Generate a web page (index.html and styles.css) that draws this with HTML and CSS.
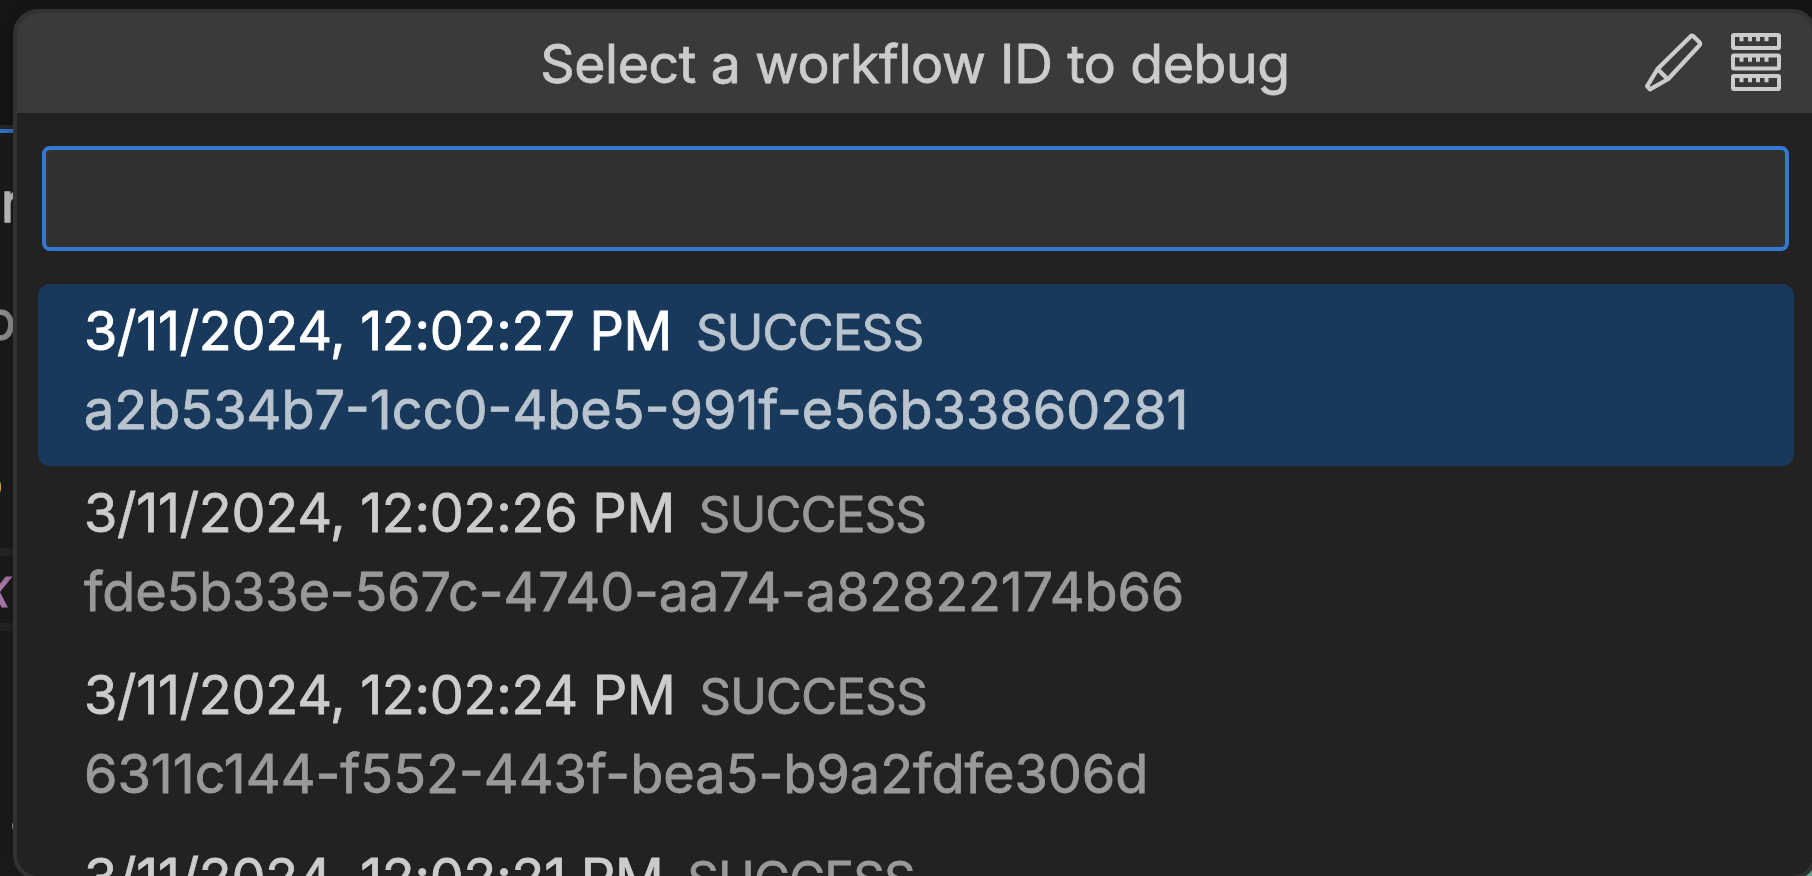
FILE: index.html
```html
<!DOCTYPE html>
<html lang="en">
<head>
<meta charset="utf-8">
<title>Select a workflow ID to debug</title>
<link rel="stylesheet" href="styles.css">
</head>
<body>
<div class="editor">
  <div class="editor-top"></div>
  <span class="frag frag-r">r</span>
  <span class="frag frag-p">p</span>
  <span class="frag-dot"></span>
  <span class="frag-rule rule-a"></span>
  <span class="frag frag-x">x</span>
  <span class="frag-rule rule-b"></span>
  <span class="frag-ring"></span>
  <span class="frag-corner"></span>
</div>
<main class="picker">
  <header class="titlebar">
    <h1 class="title">Select a workflow ID to debug</h1>
    <div class="actions">
      <svg class="icon" width="60" height="60" viewBox="0 0 60 60" fill="none" stroke="#cccccc" stroke-width="4.3" stroke-linejoin="round"><path d="M4.2 53.2 14.5 36 47.8 3.2Q49 2.2 50.3 3.2L56.5 9.2Q57.6 10.8 56.5 12.2L25.2 46 7 56.4Z"/><path d="M14.3 35.8 25 46.5"/></svg>
      <svg class="icon" width="50" height="58" viewBox="0 0 50 58"><g fill="none" stroke="#cccccc" stroke-width="4"><rect x="2" y="2" width="46" height="13" rx="1"/><rect x="2" y="22.5" width="46" height="13" rx="1"/><rect x="2" y="43" width="46" height="13" rx="1"/></g><path fill="#cccccc" d="M8.500 3h4v5.300h-4zM17 3h4v5.300h-4zM25 3h4v5.300h-4zM33.500 3h4v5.300h-4zM8.500 23.500h4v5.300h-4zM17 23.500h4v5.300h-4zM25 23.500h4v5.300h-4zM33.500 23.500h4v5.300h-4zM8.500 44h4v5.300h-4zM17 44h4v5.300h-4zM25 44h4v5.300h-4zM33.500 44h4v5.300h-4z"/></svg>
    </div>
  </header>
  <input class="filter" type="text" aria-label="Filter">
  <ul class="list">
    <li class="row selected"><div class="line"><span class="date">3/11/2024, 12:02:27 PM</span><span class="status">SUCCESS</span></div><div class="line id">a2b534b7-1cc0-4be5-991f-e56b33860281</div></li>
    <li class="row"><div class="line"><span class="date">3/11/2024, 12:02:26 PM</span><span class="status">SUCCESS</span></div><div class="line id id-tight">fde5b33e-567c-4740-aa74-a82822174b66</div></li>
    <li class="row"><div class="line"><span class="date">3/11/2024, 12:02:24 PM</span><span class="status">SUCCESS</span></div><div class="line id">6311c144-f552-443f-bea5-b9a2fdfe306d</div></li>
    <li class="row"><div class="line"><span class="date">3/11/2024, 12:02:21 PM</span><span class="status">SUCCESS</span></div></li>
  </ul>
</main>
</body>
</html>
```
FILE: styles.css
```css
* { box-sizing: border-box; margin: 0; padding: 0; }
body {
  width: 1812px; height: 876px; overflow: hidden; position: relative;
  background: #1c1c1c; color: #cccccc;
  font-family: Inter, "Liberation Sans", sans-serif;
  font-size: 54px; line-height: 79px; font-optical-sizing: none;
  -webkit-text-stroke: 0.8px currentColor;
}
.editor { position: absolute; inset: 0; overflow: hidden; }
.editor-top { height: 133px; background: #171717; border-bottom: 4px solid #3478d4; box-shadow: inset 0 -4px #2a2a2a; }
.frag { position: absolute; line-height: 60px; }
.frag-r { left: 1px; top: 173px; -webkit-text-stroke-width: 1.5px; }
.frag-p { left: -17px; top: 291px; color: #999999; }
.frag-x { left: -18px; top: 558px; color: #b180b5; font-style: italic; }
.frag-dot { position: absolute; left: -9px; top: 481px; width: 10px; height: 12px; border-radius: 4px; background: #d6b32e; }
.frag-rule { position: absolute; left: 0; width: 14px; height: 8px; background: #262626; }
.rule-a { top: 548px; }
.rule-b { top: 623px; }
.frag-ring { position: absolute; left: 12px; top: 818px; width: 16px; height: 16px; border-radius: 50%; background: #aaaaaa; }
.frag-corner { position: absolute; right: 0; bottom: 0; width: 8px; height: 8px; background: #6fb8a0; }
.picker {
  position: absolute; left: 13px; top: 9px; width: 1804px; height: 871px;
  border: 4px solid #323232; border-radius: 25px; overflow: hidden;
  background: #222222; box-shadow: 0 0 32px rgba(0, 0, 0, 0.36);
}
.titlebar { position: relative; height: 100px; background: #3a3a3a; display: flex; justify-content: center; align-items: center; }
.title { font-size: 53.6px; font-weight: 400; letter-spacing: -0.37px; white-space: nowrap; line-height: 100px; padding-top: 2px; }
.actions { position: absolute; right: 32px; top: 20px; display: flex; gap: 28px; align-items: flex-start; }
.icon { display: block; }
.filter { display: block; width: 1747px; height: 105px; margin: 33px 0 33px 25px; border: 4px solid #3478d4; border-radius: 8px; background: #313131; outline: none; color: inherit; font: inherit; }
.list { list-style: none; margin-left: 21px; width: 1756px; }
.row { height: 182.2px; padding: 7px 0 0 46px; border-radius: 12px; white-space: nowrap; }
.selected { background: #18395b; color: #ffffff; }
.line { display: flex; align-items: baseline; height: 79px; }
.date { letter-spacing: -0.27px; }
.status { font-size: 49px; letter-spacing: -0.6px; margin-left: 23.8px; opacity: 0.7; }
.id { opacity: 0.7; }
.id-tight { letter-spacing: -0.16px; }
```
